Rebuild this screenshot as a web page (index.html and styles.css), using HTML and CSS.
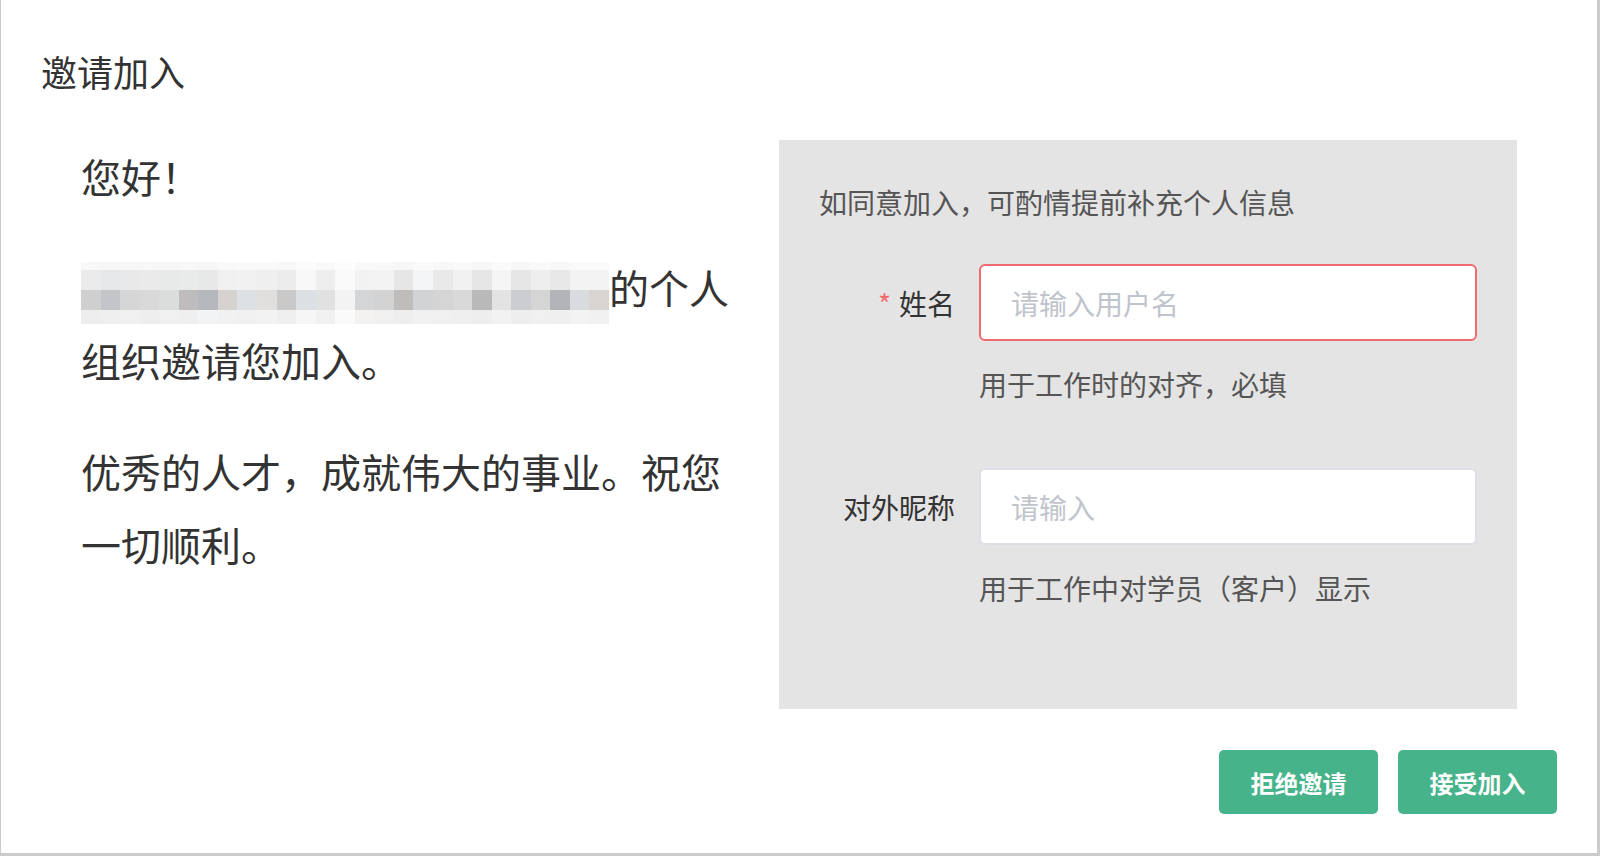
FILE: index.html
```html
<!DOCTYPE html>
<html lang="zh-CN">
<head>
    <meta charset="UTF-8">
    <title>邀请加入</title>
    <link rel="stylesheet" href="styles.css">
</head>
<body>
    <div class="dialog">
        <div class="dialog-title">邀请加入</div>

        <div class="dialog-body">
            <div class="invite-text">
                <p>您好！</p>
                <p><span class="blur-name"><span class="blur-grid" id="blur-name"></span></span>的个人组织邀请您加入。</p>
                <p>优秀的人才，成就伟大的事业。祝您一切顺利。</p>
            </div>

            <div class="profile-panel">
                <div class="panel-tip">如同意加入，可酌情提前补充个人信息</div>

                <div class="form-item">
                    <div class="form-row">
                        <label class="form-label required" for="user-name">姓名</label>
                        <input class="form-input is-error" type="text" id="user-name" placeholder="请输入用户名">
                    </div>
                    <div class="form-help">用于工作时的对齐，必填</div>
                </div>

                <div class="form-item">
                    <div class="form-row">
                        <label class="form-label" for="nick-name">对外昵称</label>
                        <input class="form-input" type="text" id="nick-name" placeholder="请输入">
                    </div>
                    <div class="form-help">用于工作中对学员（客户）显示</div>
                </div>
            </div>
        </div>

        <div class="dialog-footer">
            <button class="btn">拒绝邀请</button>
            <button class="btn">接受加入</button>
        </div>
    </div>

    <script>
        // pixelated (masked) organisation name
        const rows = [
            ['#f8f8f8','#f7f7f7','#f8f8f8','#f8f8f8','#f7f7f7','#f8f8f8','#f7f7f7','#f9f9f9','#fafafa','#f9f9f9','#f8f8f8','#fcfcfc','#f9f9f9','#fdfdfd','#f9f9f9','#f9f9f9','#f7f7f7','#fafafa','#f8f8f8','#f9f9f9','#f7f7f7','#fafafa','#f7f7f7','#f9f9f9','#f8f8f8','#fafafa','#fafafa'],
            ['#ebebeb','#e6e7e9','#e9e9e9','#eaeaea','#e8e9e9','#e9eaea','#e8e8e8','#f0f0f0','#f1f1f1','#efefef','#ececec','#f8f8f8','#eeeeee','#f9f9f9','#f2f2f2','#f3f3f3','#e6e6e6','#f4f5f7','#e9e9e9','#f1f1f1','#e6e6e6','#f5f5f5','#e6e6e6','#eeeeee','#e8e8e8','#f3f3f3','#f3f3f3'],
            ['#d0cfcf','#c3c5c8','#d6d6d6','#d9d9d9','#dbdcdc','#bebcbc','#b5b8bd','#d6d2cf','#dee1e4','#e1dfde','#cac9c9','#dde0e3','#e1e1e1','#f3f3f3','#d3d5d7','#d3d3d3','#bebdbc','#d1d3d5','#d5d5d5','#d9d9d9','#b9b9b9','#e3e3e3','#cbcdd1','#d5d5d5','#b3b4b7','#d9dbde','#d7d4d1'],
            ['#eeeeee','#efefef','#f0f0f0','#eeeeee','#f0f0f0','#efefef','#f2f3f4','#f1f1f1','#f0f0f0','#f2f2f2','#efefef','#f6f6f6','#f1f1f1','#fafafa','#f3f2f0','#f0f0f0','#eeeeee','#f1f1f1','#f0f0f0','#efefef','#eeeeee','#f2f2f2','#eeeeee','#f0f0f0','#efefef','#f3f3f3','#f1f1f1']
        ];

        const blur = document.getElementById('blur-name');
        rows.forEach(row => {
            row.forEach(color => {
                const cell = document.createElement('i');
                cell.style.background = color;
                blur.appendChild(cell);
            });
        });
    </script>
</body>
</html>
```

FILE: styles.css
```css
* {
    box-sizing: border-box;
}
body {
    margin: 0;
    font-family: "Noto Sans CJK SC", "Noto Sans", sans-serif;
    color: #333;
    background: #fff;
}
.dialog {
    width: 1600px;
    height: 856px;
    padding: 46px 40px 0;
    border-left: 1px solid #cbcbcb;
    border-right: 3px solid #cbcbcb;
    border-bottom: 3px solid #cbcbcb;
}
.dialog-title {
    font-size: 36px;
    line-height: 50px;
    margin-bottom: 44px;
}
.dialog-body {
    display: flex;
    padding: 0 40px;
}
.invite-text {
    flex: 0 0 664px;
    font-size: 40px;
    line-height: 73px;
}
.invite-text p {
    margin: 0 0 38px;
}
.blur-name {
    display: inline-block;
    width: 528px;
    height: 62px;
    overflow: hidden;
    vertical-align: -20px;
}
.blur-grid {
    display: grid;
    grid-template-columns: repeat(27, 1fr);
    grid-template-rows: 8px 20px 20px 14px;
    height: 100%;
}
.blur-grid i {
    display: block;
}
.profile-panel {
    flex: 0 0 738px;
    margin-left: auto;
    background: #e4e4e4;
    padding: 42px 40px 37px;
    font-size: 28px;
    line-height: 40px;
}
.panel-tip {
    color: #555;
    margin-bottom: 42px;
}
.form-item {
    margin-bottom: 64px;
}
.form-row {
    display: flex;
    align-items: center;
}
.form-label {
    flex: 0 0 160px;
    text-align: right;
    padding-right: 24px;
    color: #333;
}
.form-label.required::before {
    content: "*";
    color: #f56c6c;
    margin-right: 8px;
}
.form-input {
    flex: 1;
    height: 77px;
    padding: 0 30px;
    border: 2px solid #dcdfe6;
    border-radius: 6px;
    background: #fff;
    font-family: inherit;
    font-size: 28px;
    color: #333;
    outline: none;
}
.form-input::placeholder {
    color: #c0c4cc;
}
.form-input.is-error {
    border-color: #f06b6f;
}
.form-help {
    margin: 23px 0 0 160px;
    color: #555;
}
.dialog-footer {
    display: flex;
    justify-content: flex-end;
    gap: 20px;
    margin-top: 41px;
}
.btn {
    width: 159px;
    height: 64px;
    border: none;
    border-radius: 5px;
    background: #46b38a;
    color: #fff;
    font-family: inherit;
    font-size: 24px;
    font-weight: bold;
    cursor: pointer;
}
```
